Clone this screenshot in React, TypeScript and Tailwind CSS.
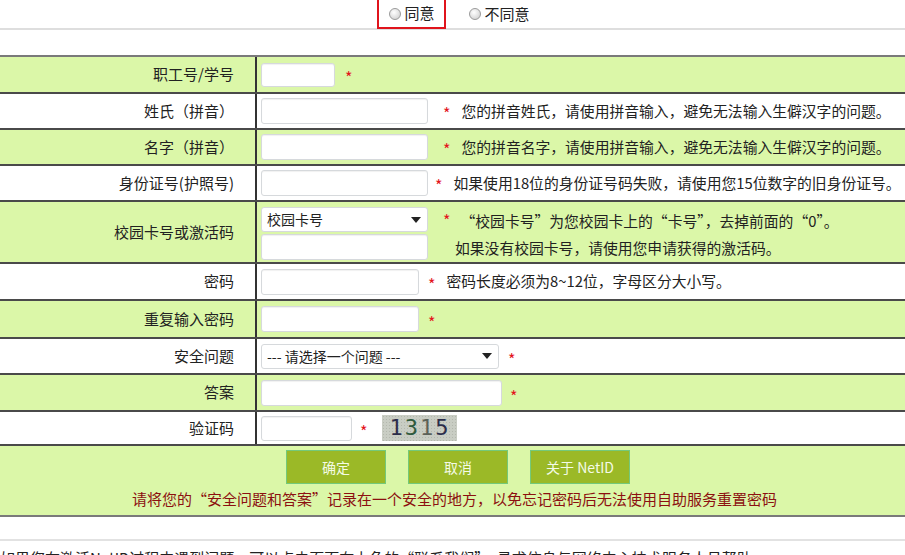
import React from 'react';

const font = "font-['Noto_Sans_CJK_SC',sans-serif]";

function Star({ className = '' }: { className?: string }) {
  return <span className={`text-[16px] leading-none text-[#e3141c] ${className}`}>*</span>;
}

function Box({ w, h = 'h-[26px]' }: { w: string; h?: string }) {
  return <div className={`${w} ${h} bg-white border border-[#d6d9dc] rounded-[3px] shadow-[inset_0_1px_1px_rgba(0,0,0,0.06)]`} />;
}

function Select({ w, text }: { w: string; text: string }) {
  return (
    <div className={`${w} h-[25px] bg-white border border-[#d6d9dc] rounded-[3px] flex items-center justify-between pl-[5px] pr-[6px] text-[14px] text-[#222]`}>
      <span>{text}</span>
      <svg width="10" height="6" viewBox="0 0 10 6"><path d="M0 0h10L5 6z" fill="#222" /></svg>
    </div>
  );
}

function Row({
  label,
  green,
  h,
  children,
}: {
  label: string;
  green?: boolean;
  h: string;
  children: React.ReactNode;
}) {
  return (
    <div className={`grid grid-cols-[257px_1fr] ${h} border-b-2 border-[#4a4a4a] ${green ? 'bg-[#dbf7a8]' : 'bg-white'}`}>
      <div className="flex items-center justify-end pr-[21px] border-r-2 border-[#333] text-[15px] text-[#222]">{label}</div>
      <div className="flex items-center pl-[4px]">{children}</div>
    </div>
  );
}

function Radio() {
  return <span className="inline-block w-[12px] h-[12px] rounded-full border border-[#9a9a9a] bg-[radial-gradient(circle_at_40%_35%,#ffffff,#c9c9c9)]" />;
}

export default function App() {
  return (
    <div className={`w-[905px] h-[555px] overflow-hidden bg-white ${font} text-[#222]`}>
      {/* agreement */}
      <div className="h-[30px] border-b-2 border-[#dedede] flex justify-center items-start pl-[2px]">
        <div className="h-[29px] w-[69px] border-2 border-[#e0141c] border-t-0 flex items-center justify-center gap-[3px] text-[15px]">
          <Radio />
          <span>同意</span>
        </div>
        <div className="h-[28px] flex items-center gap-[3px] ml-[23px] text-[15px]">
          <Radio />
          <span>不同意</span>
        </div>
      </div>

      <div className="h-[25px]" />

      <div className="border-t-2 border-[#7a7a7a]">
        <Row label="职工号/学号" green h="h-[37px]">
          <Box w="w-[74px]" h="h-[24px]" />
          <Star className="ml-[10px] mt-[4px]" />
        </Row>
        <Row label="姓氏（拼音）" h="h-[36px]">
          <Box w="w-[167px]" />
          <Star className="ml-[15px] mt-[4px]" />
          <span className="ml-[11px] text-[14.8px] whitespace-nowrap">您的拼音姓氏，请使用拼音输入，避免无法输入生僻汉字的问题。</span>
        </Row>
        <Row label="名字（拼音）" green h="h-[36px]">
          <Box w="w-[167px]" />
          <Star className="ml-[15px] mt-[4px]" />
          <span className="ml-[11px] text-[14.8px] whitespace-nowrap">您的拼音名字，请使用拼音输入，避免无法输入生僻汉字的问题。</span>
        </Row>
        <Row label="身份证号(护照号)" h="h-[36px]">
          <Box w="w-[167px]" />
          <Star className="ml-[7px] mt-[4px]" />
          <span className="ml-[11px] text-[14.8px] whitespace-nowrap">如果使用18位的身份证号码失败，请使用您15位数字的旧身份证号。</span>
        </Row>
        <div className="grid grid-cols-[257px_1fr] h-[62px] border-b-2 border-[#4a4a4a] bg-[#dbf7a8]">
          <div className="flex items-center justify-end pr-[21px] border-r-2 border-[#333] text-[15px]">校园卡号或激活码</div>
          <div className="flex pl-[4px] pt-[5px]">
            <div className="flex flex-col gap-[2px]">
              <Select w="w-[167px]" text="校园卡号" />
              <Box w="w-[167px]" />
            </div>
            <div className="ml-[15px] text-[14.8px] leading-[27px] whitespace-nowrap">
              <div>
                <Star className="mr-[10px]" />“校园卡号”为您校园卡上的“卡号”，去掉前面的“0”。
              </div>
              <div className="ml-[12px]">如果没有校园卡号，请使用您申请获得的激活码。</div>
            </div>
          </div>
        </div>
        <Row label="密码" h="h-[37px]">
          <Box w="w-[158px]" />
          <Star className="ml-[9px] mt-[4px]" />
          <span className="ml-[11px] text-[14.8px] whitespace-nowrap">密码长度必须为8~12位，字母区分大小写。</span>
        </Row>
        <Row label="重复输入密码" green h="h-[38px]">
          <Box w="w-[158px]" />
          <Star className="ml-[9px] mt-[6px]" />
        </Row>
        <Row label="安全问题" h="h-[36px]">
          <Select w="w-[238px]" text="--- 请选择一个问题 ---" />
          <Star className="ml-[9px] mt-[6px]" />
        </Row>
        <Row label="答案" green h="h-[37px]">
          <Box w="w-[241px]" />
          <Star className="ml-[8px] mt-[6px]" />
        </Row>
        <Row label="验证码" h="h-[34px]">
          <Box w="w-[91px]" h="h-[25px]" />
          <Star className="ml-[8px] mt-[6px]" />
          <div className="ml-[15px] w-[75px] h-[26px] bg-[#c9cdc4] bg-[radial-gradient(#b4b8ae_1px,transparent_1px)] bg-[length:3px_3px] flex items-center justify-center tracking-[2px] text-[22px] leading-none font-['DejaVu_Sans_Mono',monospace]">
            <span className="text-[#2c2d4a]">1</span>
            <span className="text-[#2f5a3c]">3</span>
            <span className="text-[#5b6158]">1</span>
            <span className="text-[#2c2d4a]">5</span>
          </div>
        </Row>
        <div className="h-[71px] bg-[#dbf7a8] border-b-2 border-[#7a7a7a] flex flex-col items-center pt-[4px]">
          <div className="flex gap-[22px] pl-[11px]">
            {['确定', '取消', '关于 NetID'].map((t) => (
              <div key={t} className="w-[100px] h-[34px] bg-[#9bb927] border border-[#74c97a] flex items-center justify-center text-[#f4fbe6] text-[14px]">
                {t}
              </div>
            ))}
          </div>
          <div className="mt-[4px] text-[15px] text-[#8c1010] whitespace-nowrap pl-[4px]">
            请将您的“安全问题和答案”记录在一个安全的地方，以免忘记密码后无法使用自助服务重置密码
          </div>
        </div>
      </div>

      <div className="h-[22px]" />
      <div className="border-t-2 border-[#e2e2e2] pt-[6px] text-[15px] whitespace-nowrap">
        如果您在激活NetID过程中遇到问题，可以点击页面右上角的“联系我们”，寻求信息与网络中心技术服务人员帮助。
      </div>
    </div>
  );
}
